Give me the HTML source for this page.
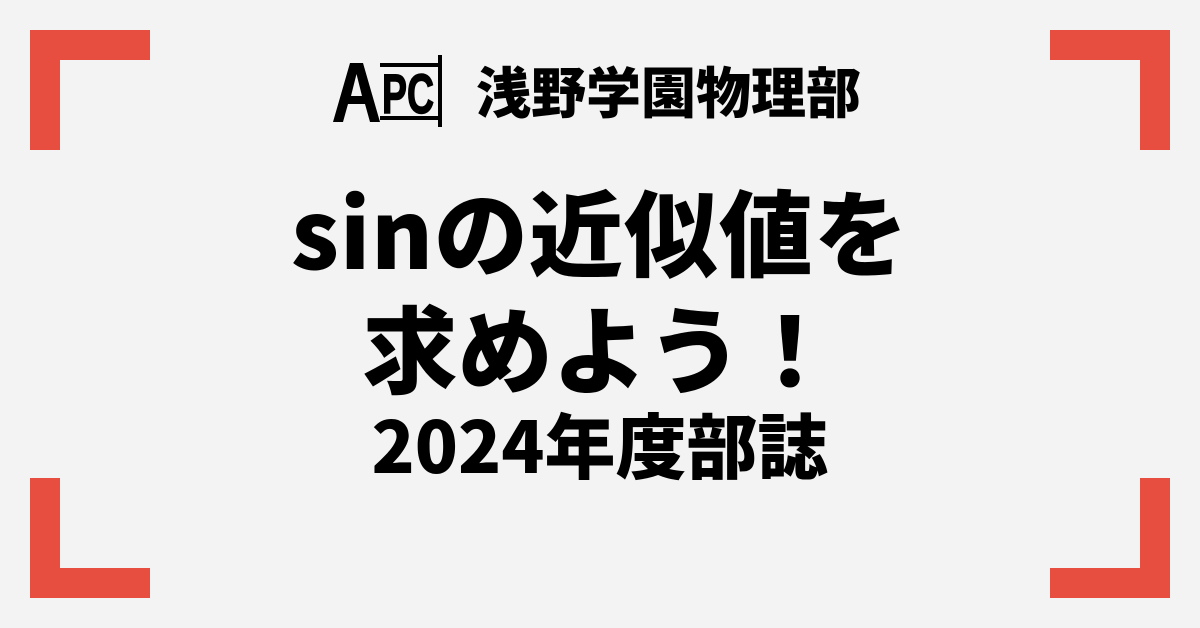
<!DOCTYPE html>
<html><head><meta charset="utf-8"><style>
body{margin:0;width:1200px;height:628px;background:#f3f3f3;position:relative;overflow:hidden;font-family:"Noto Sans CJK JP","Liberation Sans",sans-serif;font-weight:900;color:#000}
.b{position:absolute;background:#e84e3f}
.t{position:absolute;left:0;width:1200px;text-align:center;white-space:nowrap}
</style></head><body>
<div class="b" style="left:30px;top:30px;width:120px;height:30px"></div>
<div class="b" style="left:30px;top:30px;width:30px;height:120px"></div>
<div class="b" style="left:1050px;top:30px;width:120px;height:30px"></div>
<div class="b" style="left:1140px;top:30px;width:30px;height:120px"></div>
<div class="b" style="left:30px;top:568px;width:120px;height:30px"></div>
<div class="b" style="left:30px;top:478px;width:30px;height:120px"></div>
<div class="b" style="left:1050px;top:568px;width:120px;height:30px"></div>
<div class="b" style="left:1140px;top:478px;width:30px;height:120px"></div>
<svg style="position:absolute;left:330px;top:52px" width="120" height="78" viewBox="0 0 120 78">
<polygon points="3,70 20,11 33,11 50,70 40,70 35,52 18,52 13,70" fill="#000"/>
<polygon points="21,44 32,44 26.5,22" fill="#f3f3f3"/>
<rect x="50" y="11" width="60" height="4" fill="#000"/>
<rect x="50" y="64" width="60" height="4" fill="#000"/>
<rect x="108" y="3" width="4" height="72" fill="#000"/>
<text x="52" y="61" font-family="Liberation Sans" font-size="56" font-weight="bold" textLength="52" lengthAdjust="spacingAndGlyphs" stroke="#000" stroke-width="1.5">PC</text>
</svg>
<div style="position:absolute;left:476px;top:54px;font-size:55px;line-height:70px">浅野学園物理部</div>
<div class="t" style="top:182px;font-size:94px;line-height:94px;letter-spacing:1px">sinの近似値を</div>
<div class="t" style="top:298px;font-size:95px;line-height:95px">求めよう！</div>
<div class="t" style="top:408px;font-size:71px;line-height:71px">2024年度部誌</div>
</body></html>
